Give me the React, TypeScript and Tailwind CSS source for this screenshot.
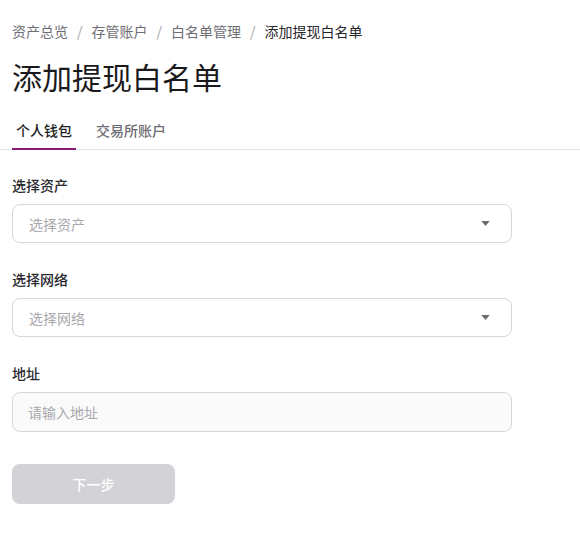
import React, { useState } from 'react';

const crumbs = ['资产总览', '存管账户', '白名单管理', '添加提现白名单'];
const tabs = ['个人钱包', '交易所账户'];

function SelectBox({ placeholder }: { placeholder: string }) {
  return (
    <button
      type="button"
      className="w-[500px] h-[39px] flex items-center justify-between pl-[16px] pr-[21px] rounded-lg border border-[#d6d5da] bg-white text-left"
    >
      <span className="text-sm text-[#a9a8ad]">{placeholder}</span>
      <svg width="9" height="5" viewBox="0 0 10 6" className="text-[#6b6a70]">
        <path d="M0 0h10L5 6z" fill="currentColor" />
      </svg>
    </button>
  );
}

export default function App() {
  const [active, setActive] = useState(0);

  return (
    <div className="min-h-screen bg-white pt-[21px] font-['Noto_Sans_CJK_SC','Noto_Sans',sans-serif] text-[#1f1f23]">
      {/* Breadcrumb */}
      <nav className="flex items-center gap-[9px] px-3 text-sm leading-5">
        {crumbs.map((c, i) => (
          <React.Fragment key={c}>
            <span className={i === crumbs.length - 1 ? 'text-[#26252a]' : 'text-[#6e6d73]'}>{c}</span>
            {i < crumbs.length - 1 && <span className="text-[#a3a2a8]">/</span>}
          </React.Fragment>
        ))}
      </nav>

      <h1 className="mt-[17px] px-3 text-[30px] leading-9 font-normal text-[#1a1a1d]">添加提现白名单</h1>

      {/* Tabs */}
      <div className="mt-[18px] flex gap-4 px-3 border-b border-[#e4e3e8]">
        {tabs.map((t, i) => (
          <button
            key={t}
            type="button"
            onClick={() => setActive(i)}
            className={`-mb-px px-1 pt-2 pb-2 text-sm leading-5 font-medium border-b-2 ${
              active === i ? 'border-[#8a1c7c] text-[#1f1f23]' : 'border-transparent text-[#6e6d73]'
            }`}
          >
            {t}
          </button>
        ))}
      </div>

      <div className="px-3">
        <div className="mt-[25px] text-sm leading-5 font-medium text-[#2a292e]">选择资产</div>
        <div className="mt-[9px]">
          <SelectBox placeholder="选择资产" />
        </div>

        <div className="mt-[26px] text-sm leading-5 font-medium text-[#2a292e]">选择网络</div>
        <div className="mt-[9px]">
          <SelectBox placeholder="选择网络" />
        </div>

        <div className="mt-[26px] text-sm leading-5 font-medium text-[#2a292e]">地址</div>
        <div className="mt-[9px]">
          <input
            placeholder="请输入地址"
            className="w-[500px] h-[40px] px-[15px] rounded-lg border border-[#d6d5da] bg-[#fafafa] text-sm outline-none placeholder:text-[#a9a8ad]"
          />
        </div>

        <button
          type="button"
          disabled
          className="mt-[32px] w-[163px] h-[40px] rounded-lg bg-[#d3d2d7] text-sm font-medium text-white"
        >
          下一步
        </button>
      </div>
    </div>
  );
}
